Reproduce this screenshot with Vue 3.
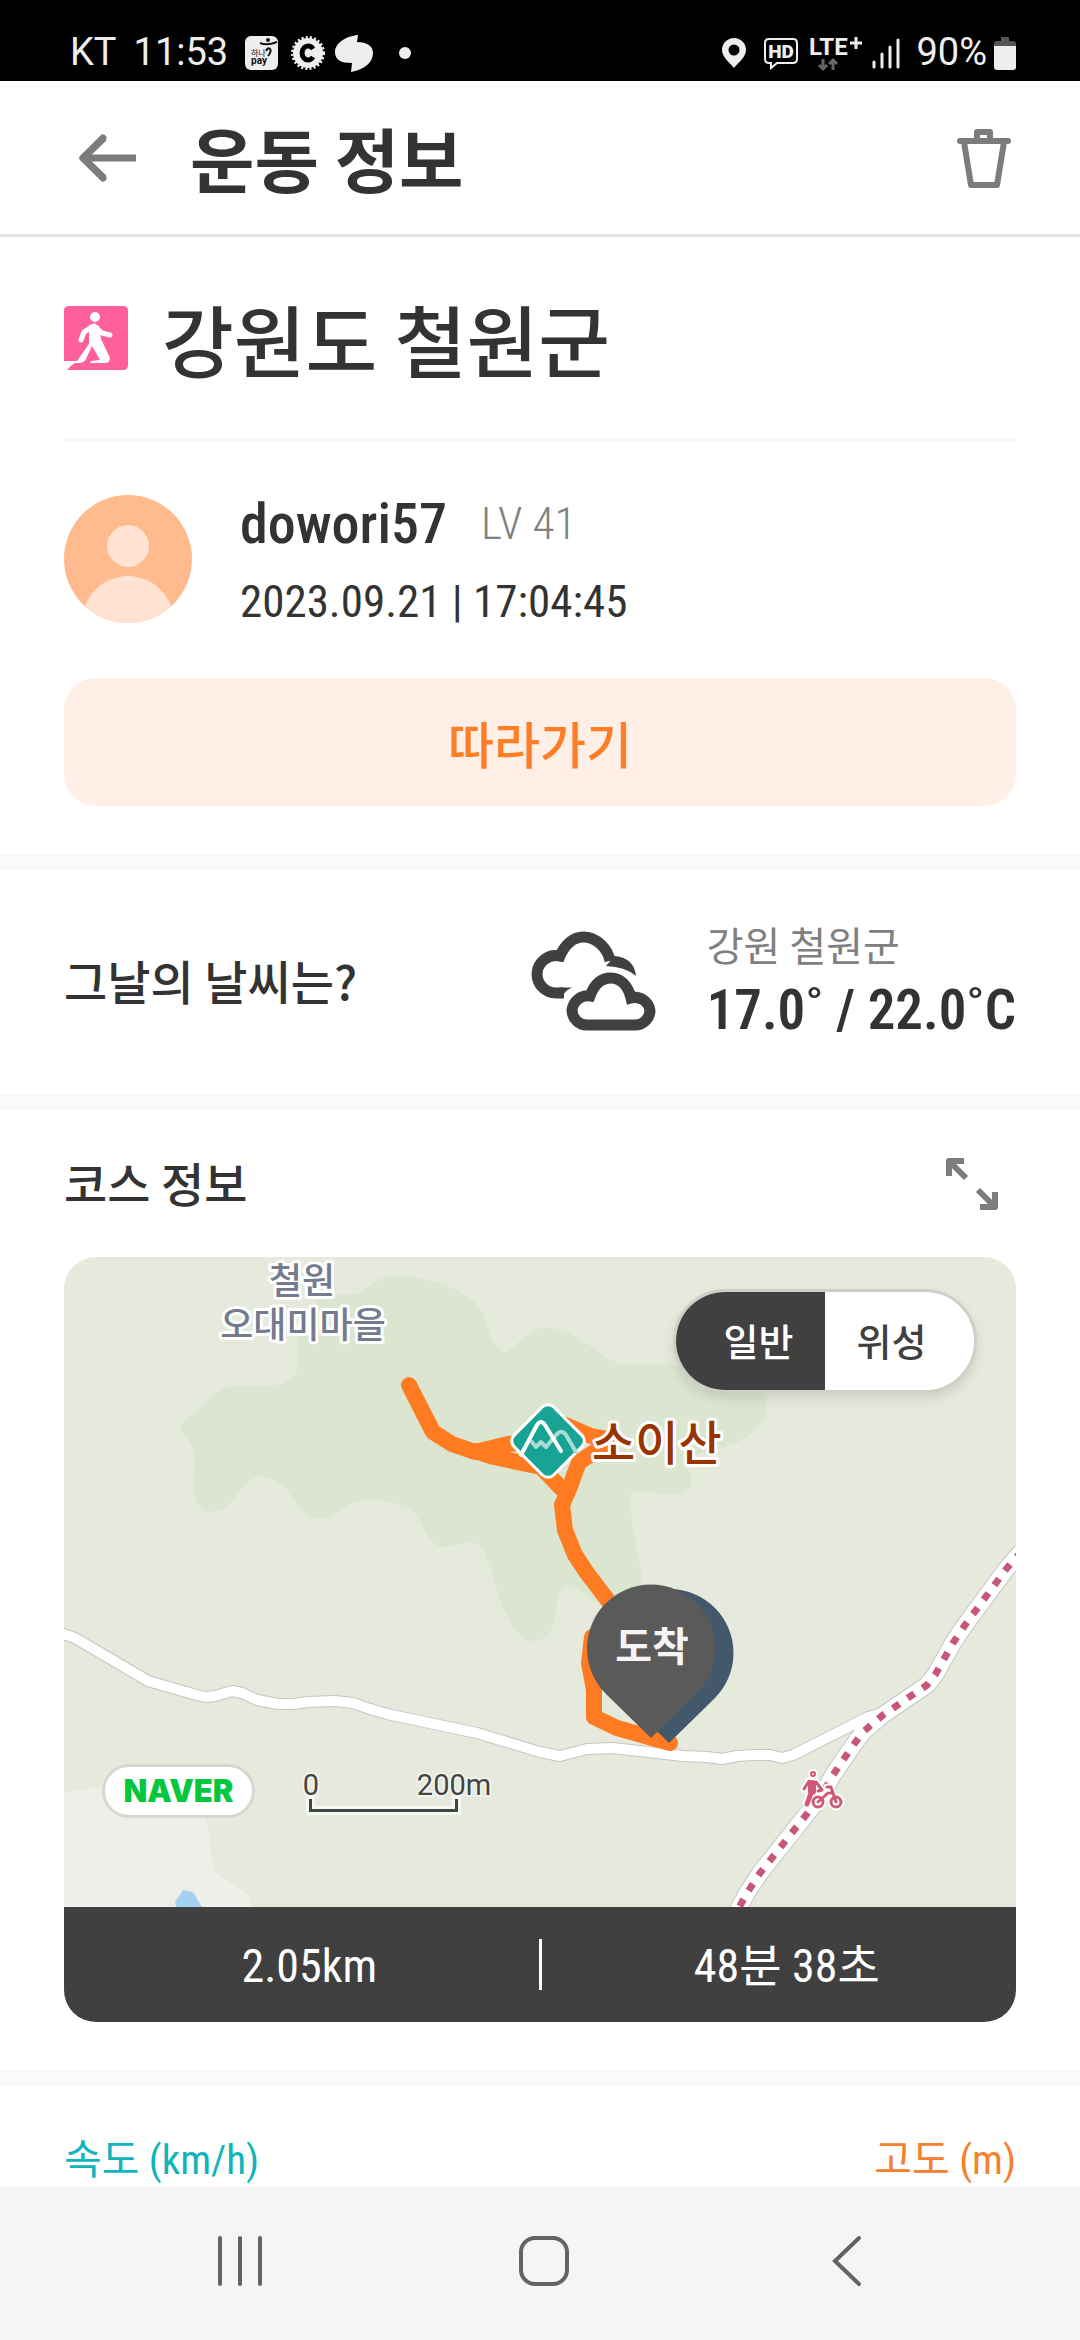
<template>
  <div class="screen">
    <div class="status-bar">
      <div class="status-left">
        <span class="status-text">KT</span>
        <span class="status-text">11:53</span>
        <svg class="status-pay" width="33" height="34" viewBox="0 0 33 34">
          <rect width="33" height="34" rx="6" fill="#eee" />
          <g fill="none" stroke="#111">
            <path d="M15 7q7 3 17-1" stroke-width="2" />
            <path d="M21 15q2-4 4-2q2 2-2 7" stroke-width="2" />
          </g>
          <circle cx="23" cy="4" r="2" fill="#111" />
          <text x="6" y="20" font-size="8" fill="#111">하나</text>
          <text x="6" y="28" font-size="10" font-weight="700" fill="#111">pay</text>
        </svg>
        <svg class="status-coin" width="34" height="34" viewBox="0 0 34 34">
          <circle cx="17" cy="17" r="15" fill="#eee" />
          <circle cx="17" cy="17" r="15" fill="none" stroke="#eee" stroke-width="4" stroke-dasharray="2 2" />
          <path d="M22 13a6 7 0 1 0 0 8" fill="none" stroke="#000" stroke-width="5" />
        </svg>
        <svg class="status-blob" width="38" height="38" viewBox="0 0 38 38">
          <path d="M23 1L22 8C32 8 38 12 38 19C38 29 28 36 16 38L17 29C6 29 0 26 0 18C0 9 11 2 23 1Z" fill="#eee" />
        </svg>
        <span class="status-dot"></span>
      </div>
      <div class="status-right">
        <svg width="26" height="32" viewBox="0 0 26 32">
          <path fill-rule="evenodd" d="M13 1a12 12 0 0 1 12 12c0 7-8 13-12 18C9 26 1 20 1 13A12 12 0 0 1 13 1ZM13 7.500a5.500 5.500 0 1 0 0 11a5.500 5.500 0 0 0 0-11Z" fill="#eee" />
        </svg>
        <svg class="status-hd" width="36" height="32" viewBox="0 0 36 32">
          <path d="M6 2H30Q34 2 34 6V22Q34 26 30 26H14L8 31V26H6Q2 26 2 22V6Q2 2 6 2Z" fill="none" stroke="#eee" stroke-width="2" />
          <text x="18" y="21" text-anchor="middle" font-size="19" font-weight="900" fill="#eee">HD</text>
        </svg>
        <svg class="status-lte" width="54" height="36" viewBox="0 0 54 36">
          <text x="0" y="20" font-size="24" font-weight="700" fill="#eee">LTE</text>
          <path d="M41 8H53M47 2V14" stroke="#eee" stroke-width="3" />
          <path d="M14 24V34M10 30L14 34L18 30M24 35V25M20 29L24 25L28 29" fill="none" stroke="#666" stroke-width="3" />
        </svg>
        <svg class="status-signal" width="28" height="32" viewBox="0 0 28 32">
          <path d="M2 25V30M10 17V30M18 10V30M26 3V30" stroke="#eee" stroke-width="3" stroke-linecap="round" />
        </svg>
        <span class="status-text">90%</span>
        <svg class="status-battery" width="22" height="34" viewBox="0 0 22 34">
          <path d="M7 1H15V5H19Q22 5 22 8V10H0V8Q0 5 3 5H7Z" fill="#555" />
          <path d="M0 10H22V31Q22 34 19 34H3Q0 34 0 31Z" fill="#eee" />
        </svg>
      </div>
    </div>

    <header class="app-header">
      <button class="icon-button" type="button" aria-label="뒤로">
        <svg width="60" height="50" viewBox="0 0 60 50">
          <path d="M58 25H5M26 5L5 25L26 45" fill="none" stroke="#7c7c7c" stroke-width="7" stroke-linejoin="round" />
          <path d="M5 25L25 5M5 25L25 45" fill="none" stroke="#7c7c7c" stroke-width="7" stroke-linecap="round" />
        </svg>
      </button>
      <h1>운동 정보</h1>
      <button class="icon-button" type="button" aria-label="삭제">
        <svg width="56" height="62" viewBox="0 0 56 62">
          <g fill="none" stroke="#7c7c7c" stroke-width="6" stroke-linecap="round" stroke-linejoin="round">
            <path d="M4 14H52M21 13V5H34V13" />
            <path d="M8 15L15 58H41L48 15" />
          </g>
        </svg>
      </button>
    </header>

    <section class="course-title">
      <svg width="64" height="64" viewBox="0 0 64 64">
        <path d="M5 0H59Q64 0 64 5V59Q64 64 59 64H3Q9 56 18 55L0 55V5Q0 0 5 0Z" fill="#ff5f9b" />
        <circle cx="31" cy="11" r="5" fill="#fff" />
        <path d="M30 20L20 26L17 34M31 21L38 27L46 29" fill="none" stroke="#fff" stroke-width="5" stroke-linecap="round" stroke-linejoin="round" />
        <path d="M25 19Q31 17 35 20L37 33L46 52Q46 57 41 57H26L27 55L36 54L28 40L22 53Q20 57 15 57L0 57V55H13L25 38Z" fill="#fff" />
      </svg>
      <h2>강원도 철원군</h2>
    </section>

    <section class="author">
      <div class="author-row">
        <svg class="avatar" width="128" height="128" viewBox="0 0 128 128">
          <defs>
            <clipPath id="avatar-clip"><circle cx="64" cy="64" r="64" /></clipPath>
          </defs>
          <g clip-path="url(#avatar-clip)">
            <rect width="128" height="128" fill="#ffba8e" />
            <circle cx="64" cy="51" r="21" fill="#ffe2d1" />
            <circle cx="64" cy="127" r="46" fill="#ffe2d1" />
          </g>
        </svg>
        <div class="author-text">
          <div class="author-name">
            <strong>dowori57</strong>
            <span>LV 41</span>
          </div>
          <time datetime="2023-09-21T17:04:45">2023.09.21 | 17:04:45</time>
        </div>
      </div>
      <button class="follow-button" type="button">따라가기</button>
    </section>

    <section class="weather">
      <h3>그날의 날씨는?</h3>
      <svg width="126" height="102" viewBox="0 0 126 102">
        <g fill="none" stroke="#404040" stroke-width="11">
          <path d="M33 62H25A19 19 0 0 1 6 43A19 19 0 0 1 29 25C34 13 43 6 52 6C66 6 77 18 79 30" />
          <path d="M57 94H104A15 15 0 0 0 119 80A15 15 0 0 0 100 67C97 54 89 47 80 47C70 47 63 54 59 65A16 16 0 0 0 41 79A15 15 0 0 0 57 94Z" />
        </g>
        <path d="M74 36L84 25Q103 27 105 45Q95 36 75 35Z" fill="#404040" />
        <path d="M28 20L31 31L23 27ZM30 68Q33 60 41 56.500L28 56.500Z" fill="#404040" />
      </svg>
      <div class="weather-text">
        <p class="weather-region">강원 철원군</p>
        <p class="weather-temp">17.0˚ / 22.0˚C</p>
      </div>
    </section>

    <section class="course">
      <div class="course-head">
        <h3>코스 정보</h3>
        <button class="icon-button" type="button" aria-label="지도 확대">
          <svg width="52" height="52" viewBox="0 0 52 52">
            <g fill="none" stroke="#7c7c7c" stroke-width="6" stroke-linejoin="round">
              <path d="M3 18V3H18M3 3L20 20" />
              <path d="M49 34V49H34M49 49L32 32" />
            </g>
          </svg>
        </button>
      </div>

      <div class="course-card">
        <div class="map">
          <svg class="map-canvas" viewBox="0 0 952 650" preserveAspectRatio="xMidYMid slice">
            <rect width="952" height="650" fill="#e6eadc" />
            <path :d="smooth(forest)" fill="#dbe5d0" />
            <path d="M0 536L39 529L138 512L142 560L150 614L184 638L189 650H0Z" fill="#ecf0e9" />
            <path d="M111 645L119 633L129 635L138 650H112Z" fill="#a4d1f2" />

            <g fill="none" stroke-linejoin="round">
              <g stroke="#c4c6c2">
                <polyline :points="villageRoad" stroke-width="12" />
                <polyline :points="mainRoad" stroke-width="18" />
              </g>
              <g stroke="#fff">
                <polyline :points="villageRoad" stroke-width="10" />
                <polyline :points="mainRoad" stroke-width="16" />
              </g>
              <polyline :points="mainRoad" stroke="#c75678" stroke-width="7" stroke-dasharray="8 10" />
            </g>

            <!-- bike rental -->
            <g v-for="layer in bikeLayers" :key="layer.color" fill="none" :stroke="layer.color" stroke-linecap="round" stroke-linejoin="round">
              <circle cx="749" cy="517" r="1" :stroke-width="4 + layer.grow" />
              <path d="M748 527V534" :stroke-width="8 + layer.grow" />
              <path d="M747 536L743 547" :stroke-width="5 + layer.grow" />
              <path d="M745 524L740 532M752 525L758 533L754 534" :stroke-width="3 + layer.grow" />
              <path d="M754 545L764 536M763 530H767L772 545M766 536L769 536" :stroke-width="3 + layer.grow" />
              <circle cx="754" cy="545" r="5" :stroke-width="3 + layer.grow" />
              <circle cx="772" cy="545" r="5" :stroke-width="3 + layer.grow" />
            </g>

            <g fill="none" stroke="#ff7b22" stroke-width="16" stroke-linecap="round" stroke-linejoin="round">
              <path d="M345 128L369 175L388 187L411 195L444 187L484 184" />
              <path d="M411 194L430 200L477 210L497 231" />
              <path d="M497 166L527 179L549 183L515 205L505 232L498 248L501 273L511 298L523 316L552 354" />
              <path d="M528 380L525 406L530 433L530 460L553 471L606 486" />
            </g>

            <!-- summit marker -->
            <rect x="456" y="156" width="56" height="56" rx="8" transform="rotate(45 484 184)" fill="#18a495" stroke="#fff" stroke-width="3" />
            <g fill="none" stroke-width="4" stroke-linecap="round" stroke-linejoin="round">
              <path d="M468 185L472 190L477 185L482 190L493 177Q498 172 502 178L512 195" stroke="#a9dcd4" />
              <path d="M457 198L473 168Q477 162 481 168L497 194" stroke="#fff" />
            </g>

            <g class="map-label">
              <text x="238" y="37" font-size="36" fill="#757b8e" text-anchor="middle">철원</text>
              <text x="239" y="81" font-size="36" fill="#757b8e" text-anchor="middle">오대미마을</text>
              <text x="528" y="203" font-size="47" fill="#993300">소이산</text>
            </g>

            <path d="M605 486L561 442A64 64 0 1 1 650 442Z" fill="#44586b" />
            <path d="M587 481L542 437A64 64 0 1 1 632 437Z" fill="#5a5a5a" />
            <text class="pin-label" x="588" y="404" text-anchor="middle">도착</text>

            <path d="M246.500 539V553.500H392.500V539" fill="none" stroke="#fff" stroke-opacity="0.600" stroke-width="9" />
            <path d="M246.500 542V553.500H392.500V542" fill="none" stroke="#404545" stroke-width="3" />
            <g class="map-scale">
              <text x="247" y="538" text-anchor="middle">0</text>
              <text x="390" y="538" text-anchor="middle">200m</text>
            </g>
          </svg>

          <a class="naver-badge" href="#">NAVER</a>

          <div class="map-toggle">
            <button
              v-for="type in mapTypes"
              :key="type"
              type="button"
              :class="{ active: type === mapType }"
              @click="mapType = type"
            >{{ type }}</button>
          </div>
        </div>

        <div class="course-stats">
          <span>2.05km</span>
          <i></i>
          <span>48분 38초</span>
        </div>
      </div>
    </section>

    <section class="chart-labels">
      <span class="speed">속도 (km/h)</span>
      <span class="altitude">고도 (m)</span>
    </section>

    <nav class="nav-bar">
      <button type="button" aria-label="최근 앱">
        <svg width="52" height="52" viewBox="0 0 52 52">
          <path d="M6 3V49M26 3V49M46 3V49" stroke="#636363" stroke-width="4" stroke-linecap="round" />
        </svg>
      </button>
      <button type="button" aria-label="홈">
        <svg width="52" height="52" viewBox="0 0 52 52">
          <rect x="3" y="3" width="46" height="46" rx="14" fill="none" stroke="#636363" stroke-width="4" />
        </svg>
      </button>
      <button type="button" aria-label="이전">
        <svg width="52" height="52" viewBox="0 0 52 52">
          <path d="M38 3L14 26L38 49" fill="none" stroke="#636363" stroke-width="4" stroke-linecap="round" />
        </svg>
      </button>
    </nav>
  </div>
</template>

<script setup>
import { ref } from 'vue';

const mapTypes = ['일반', '위성'];
const mapType = ref('일반');

const bikeLayers = [
  { color: '#fff', grow: 4 },
  { color: '#cf5777', grow: 0 }
];

const forest = [
  [251, 38], [286, 38], [299, 35], [316, 21], [334, 17], [363, 22], [396, 34], [416, 48], [426, 80],
  [437, 96], [446, 94], [469, 70], [496, 71], [523, 86], [541, 100], [559, 109], [602, 106], [622, 112],
  [695, 130], [707, 150], [689, 178], [659, 192], [620, 200], [631, 228], [612, 240], [568, 232],
  [565, 246], [573, 293], [579, 326], [579, 370], [536, 348], [503, 325], [494, 334], [490, 373],
  [476, 384], [458, 384], [439, 353], [429, 320], [419, 290], [406, 284], [379, 292], [366, 285],
  [351, 253], [329, 245], [306, 241], [286, 246], [269, 258], [254, 262], [238, 256], [226, 236],
  [213, 223], [196, 218], [183, 224], [166, 248], [151, 256], [134, 252], [128, 231], [133, 196],
  [116, 173], [118, 163], [138, 151], [156, 131], [169, 129], [203, 130], [223, 126], [236, 113], [232, 80]
];

const villageRoad = '-4,376 11,381 84,424 129,437 141,440 151,439 168,434 178,436 193,443 214,447 229,447 243,445 271,444 289,446 303,451 323,457 413,476 476,495 496,499 523,492 549,491 619,499 643,500 658,502 673,499 689,498 706,498 718,501 729,498 804,460 819,456';

const mainRoad = '958,294 943,311 901,368 889,386 871,418 863,428 819,458 799,475 788,490 769,518 758,538 696,616 683,636 671,658';

// closed curve through the midpoints of the given points
const smooth = (points) => {
  const mid = (a, b) => `${(a[0] + b[0]) / 2} ${(a[1] + b[1]) / 2}`;
  const last = points[points.length - 1];
  const curves = points.map((p, i) => `Q${p[0]} ${p[1]} ${mid(p, points[(i + 1) % points.length])}`);
  return `M${mid(last, points[0])}${curves.join('')}Z`;
};
</script>

<style>
body {
  margin: 0;
  background-color: #fff;
}
</style>

<style scoped>
.screen {
  display: flex;
  flex-direction: column;
  min-height: 100vh;
  color: #333;
  font-family: "Roboto Condensed", "Liberation Sans Narrow", "Noto Sans CJK KR", sans-serif;
}
svg {
  display: block;
  flex-shrink: 0;
  overflow: visible;
}
h1, h2, h3, p {
  margin: 0;
}
h1, h2, h3 {
  font-family: "Noto Sans CJK KR", sans-serif;
}
button {
  padding: 0;
  border: none;
  background: none;
  font-family: inherit;
  cursor: pointer;
}
.status-bar {
  display: flex;
  justify-content: space-between;
  height: 81px;
  padding: 24px 64px 0 70px;
  box-sizing: border-box;
  background-color: #000;
  color: #eee;
  font-family: Roboto, "Noto Sans CJK KR", sans-serif;
}
.status-left,
.status-right {
  display: flex;
  align-items: center;
  height: 57px;
}
.status-text {
  font-size: 38px;
  line-height: 57px;
}
.status-left .status-text {
  margin-right: 17px;
}
.status-coin {
  margin-left: 13px;
}
.status-blob {
  margin-left: 10px;
}
.status-dot {
  width: 12px;
  height: 12px;
  margin-left: 26px;
  border-radius: 50%;
  background-color: #eee;
}
.status-hd {
  margin-left: 16px;
}
.status-lte {
  margin-left: 10px;
}
.status-signal {
  margin-left: 9px;
}
.status-right .status-text {
  margin-left: 16px;
}
.status-battery {
  margin-left: 7px;
}
.app-header {
  display: flex;
  align-items: center;
  height: 153px;
  padding: 0 68px 0 78px;
  border-bottom: 3px solid #e3e3e3;
}
.app-header h1 {
  flex: 1;
  margin-left: 52px;
  font-size: 70px;
  font-weight: 700;
  line-height: 100px;
}
.course-title {
  display: flex;
  align-items: center;
  height: 201px;
  margin: 0 64px;
  border-bottom: 3px solid #f8f8f8;
}
.course-title h2 {
  margin-left: 34px;
  font-size: 78px;
  font-weight: 500;
  line-height: 110px;
}
.author {
  padding: 54px 64px 48px;
}
.author-row {
  display: flex;
  height: 128px;
}
.author-text {
  display: flex;
  flex-direction: column;
  gap: 32px;
  margin-left: 48px;
  padding-top: 6px;
  font-size: 45px;
  line-height: 46px;
}
.author-name {
  display: flex;
  gap: 34px;
}
.author-name strong {
  font-size: 56px;
  font-weight: 500;
}
.author-name span {
  color: #808080;
  font-weight: 300;
}
.follow-button {
  width: 100%;
  height: 128px;
  margin-top: 55px;
  border-radius: 32px;
  background-color: #ffefe6;
  color: #fd7e26;
  font-size: 50px;
  font-weight: 500;
}
.weather {
  display: flex;
  align-items: center;
  height: 224px;
  padding: 0 64px;
  border-top: 16px solid #fafafa;
  border-bottom: 16px solid #fafafa;
}
.weather h3,
.course-head h3 {
  flex: 1;
  padding-bottom: 4px;
  font-size: 47px;
  font-weight: 500;
  line-height: 66px;
}
.weather-text {
  margin-left: 50px;
}
.weather-region {
  color: #808080;
  font-size: 40px;
  line-height: 56px;
}
.weather-temp {
  font-size: 55px;
  font-weight: 600;
  line-height: 68px;
}
.course {
  padding: 0 64px 48px;
  border-bottom: 16px solid #fafafa;
}
.course-head {
  display: flex;
  align-items: center;
  height: 147px;
  padding-right: 18px;
}
.course-card {
  overflow: hidden;
  border-radius: 32px;
}
.map {
  position: relative;
}
.map-canvas {
  width: 100%;
  height: 650px;
  overflow: hidden;
}
.map-label text {
  font-weight: 500;
  stroke: #fff;
  stroke-width: 6px;
  stroke-linejoin: round;
  paint-order: stroke;
}
.pin-label {
  fill: #f4f4f4;
  font-size: 40px;
  font-weight: 700;
}
.map-scale text {
  fill: #444;
  font-family: Roboto, sans-serif;
  font-size: 29px;
  stroke: #f4f6f0;
  stroke-width: 3px;
  paint-order: stroke;
}
.naver-badge {
  position: absolute;
  left: 38px;
  bottom: 89px;
  width: 153px;
  border: 3px solid #d5d8cf;
  border-radius: 27px;
  box-sizing: border-box;
  background-color: #fff;
  color: #03c73c;
  font-family: Inter, sans-serif;
  font-size: 31px;
  font-weight: 900;
  line-height: 48px;
  text-align: center;
  text-decoration: none;
}
.map-toggle {
  position: absolute;
  top: 32px;
  right: 39px;
  display: flex;
  overflow: hidden;
  border: 3px solid #cdd1c5;
  border-radius: 52px;
  background-color: #fff;
  box-shadow: 0 6px 12px rgba(0, 0, 0, 0.1);
}
.map-toggle button {
  width: 149px;
  height: 98px;
  padding-bottom: 4px;
  color: #404040;
  font-size: 38px;
  font-weight: 500;
}
.map-toggle button:first-child {
  padding-left: 16px;
}
.map-toggle button:last-child {
  padding-right: 16px;
}
.map-toggle .active {
  background-color: #404040;
  color: #fff;
}
.course-stats {
  display: flex;
  align-items: center;
  height: 115px;
  background-color: #404040;
  color: #fff;
  font-size: 46px;
  line-height: 60px;
}
.course-stats span {
  flex: 1;
  padding: 2px 0 0 16px;
  text-align: center;
}
.course-stats i {
  width: 3px;
  height: 51px;
  background-color: #fff;
}
.chart-labels {
  display: flex;
  justify-content: space-between;
  padding: 48px 64px 0;
  font-size: 41px;
  line-height: 53px;
}
.speed {
  color: #0fb5ba;
}
.altitude {
  color: #f5802e;
}
.nav-bar {
  display: flex;
  justify-content: space-between;
  align-items: center;
  height: 153px;
  margin-top: auto;
  padding: 0 207px 6px 214px;
  box-sizing: border-box;
  background-color: #f5f5f5;
}
</style>
